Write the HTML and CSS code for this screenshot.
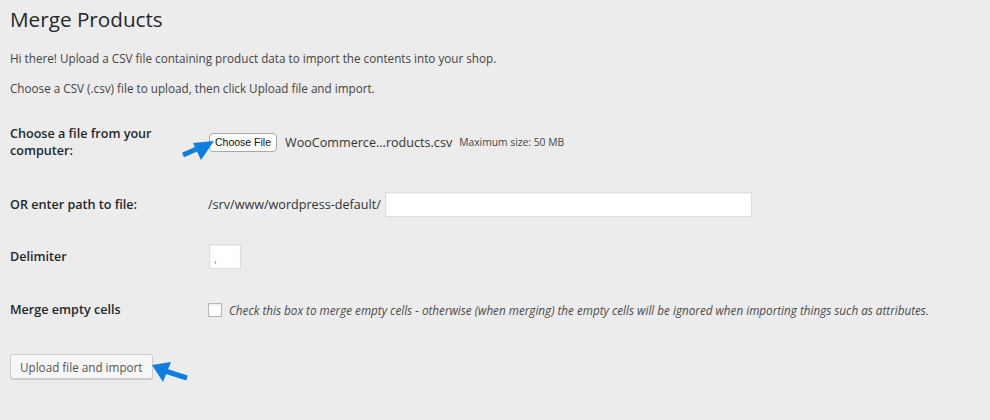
FILE: index.html
```html
<!DOCTYPE html>
<html>
    <head>
        <meta charset="utf-8">
        <link rel="stylesheet" href="styles.css">
    </head>

    <body>
        <div class="wrap">
            <h1>Merge Products</h1>
            <p>Hi there! Upload a CSV file containing product data to import the contents into your shop.</p>
            <p>Choose a CSV (.csv) file to upload, then click Upload file and import.</p>

            <form class="import-form">
                <div class="form-row row-file">
                    <label class="row-label">Choose a file from your computer:</label>
                    <div class="row-field">
                        <span class="file-btn">Choose File</span>
                        <span class="file-name">WooCommerce...roducts.csv</span>
                        <small class="max-size">Maximum size: 50 MB</small>
                    </div>
                </div>

                <div class="form-row row-path">
                    <label class="row-label">OR enter path to file:</label>
                    <div class="row-field">
                        <span class="path-prefix">/srv/www/wordpress-default/</span>
                        <input type="text" class="path-input">
                    </div>
                </div>

                <div class="form-row row-delim">
                    <label class="row-label">Delimiter</label>
                    <div class="row-field">
                        <input type="text" class="delim-input" value=",">
                    </div>
                </div>

                <div class="form-row row-merge">
                    <label class="row-label">Merge empty cells</label>
                    <div class="row-field">
                        <span class="checkbox"></span>
                        <em class="description">Check this box to merge empty cells - otherwise (when merging) the empty cells will be ignored when importing things such as attributes.</em>
                    </div>
                </div>

                <div class="submit-row">
                    <button type="button" class="button">Upload file and import</button>
                </div>
            </form>

            <!-- annotation arrows -->
            <svg class="arrow arrow-file" width="40" height="30" viewBox="180 135 40 30">
                <line x1="183" y1="155" x2="199" y2="148" stroke="#0f7fdf" stroke-width="5"/>
                <polygon points="214,141 193,143 201,160" fill="#0f7fdf"/>
            </svg>
            <svg class="arrow arrow-submit" width="40" height="26" viewBox="150 360 40 26">
                <line x1="165" y1="371" x2="187" y2="378" stroke="#0f7fdf" stroke-width="5"/>
                <polygon points="152,365 171,362 163,382" fill="#0f7fdf"/>
            </svg>
        </div>
    </body>
</html>
```

FILE: styles.css
```css
* {
    box-sizing: border-box;
}

body {
    margin: 0;
    padding: 0;
    background-color: #ececec;
    font-family: "Open Sans", sans-serif;
    font-size: 11.7px;
    color: #444;
}

.wrap {
    position: relative;
    padding: 5px 10px 0 10px;
    height: 420px;
}

h1 {
    margin: 0;
    font-size: 20.7px;
    font-weight: 400;
    line-height: 29px;
    color: #23282d;
}

p {
    margin: 0;
    line-height: 20px;
}

.wrap h1 + p {
    margin-top: 14px;
}

.wrap p + p {
    margin-top: 10px;
}

.import-form {
    margin-top: 13px;
}

.form-row {
    display: grid;
    grid-template-columns: 198px 1fr;
    align-items: center;
}

.row-file { height: 62px; }
.row-path { height: 63px; }
.row-delim { height: 41px; }
.row-merge { height: 65px; }

.row-label {
    font-size: 12.6px;
    font-weight: 600;
    line-height: 17px;
    color: #23282d;
    padding-right: 10px;
}

.row-field {
    display: flex;
    align-items: center;
}

.file-btn {
    display: inline-block;
    height: 19px;
    line-height: 17px;
    padding: 0 5px;
    margin-left: 1px;
    border: 1px solid #a9a9a9;
    border-radius: 4px;
    background-color: #fff;
    font-family: "Liberation Sans", Arial, sans-serif;
    font-size: 10.5px;
    color: #111;
}

.file-name {
    margin-left: 8px;
    font-size: 12.6px;
    color: #333;
}

.max-size {
    margin-left: 7px;
    font-size: 10.3px;
    color: #444;
}

.path-prefix {
    font-size: 12.6px;
    color: #333;
}

input[type=text] {
    height: 25px;
    border: 1px solid #ddd;
    background-color: #fff;
    box-shadow: inset 0 1px 2px rgba(0, 0, 0, 0.07);
    font-family: "Open Sans", sans-serif;
    font-size: 11px;
    color: #888;
}

.path-input {
    width: 367px;
    margin-left: 4px;
}

.delim-input {
    width: 32px;
    margin-left: 1px;
    padding: 4px 4px 0 4px;
}

.checkbox {
    display: inline-block;
    width: 14px;
    height: 14px;
    border: 1px solid #b4b9be;
    background-color: #fff;
    box-shadow: inset 0 1px 2px rgba(0, 0, 0, 0.1);
}

.description {
    margin-left: 7px;
    font-size: 11.7px;
    color: #4a4a4a;
}

.submit-row {
    margin-top: 12px;
}

.button {
    height: 25px;
    padding: 0 9px;
    border: 1px solid #ccc;
    border-radius: 3px;
    background-color: #f7f7f7;
    box-shadow: 0 1px 0 #ccc;
    font-family: "Open Sans", sans-serif;
    font-size: 11.7px;
    color: #555;
}

.arrow {
    position: absolute;
}

.arrow-file {
    left: 180px;
    top: 135px;
}

.arrow-submit {
    left: 150px;
    top: 360px;
}
```
